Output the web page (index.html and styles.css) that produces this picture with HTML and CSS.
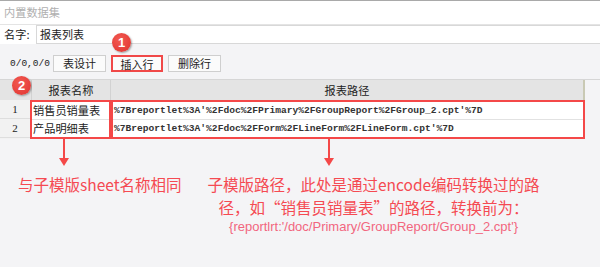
FILE: index.html
```html
<!DOCTYPE html>
<html lang="zh-CN">
<head>
    <meta charset="UTF-8">
    <title>内置数据集</title>
    <link rel="stylesheet" href="styles.css">
</head>
<body>
    <div class="dialog">
        <div class="titlebar">内置数据集</div>

        <div class="name-row">
            <span class="name-label">名字:</span>
            <div class="name-input">报表列表</div>
        </div>

        <!-- toolbar -->
        <div class="toolbar">
            <span class="pos">0/0,0/0</span>
            <button class="btn">表设计</button>
            <button class="btn btn-marked">插入行<span class="badge badge-1">1</span></button>
            <button class="btn">删除行</button>
        </div>

        <!-- data grid -->
        <div class="grid">
            <div class="grid-head">
                <div class="hcell hcell-num"><span class="badge badge-2">2</span></div>
                <div class="hcell hcell-name">报表名称</div>
                <div class="hcell hcell-path">报表路径</div>
            </div>
            <div class="grid-body">
                <div class="col-num">
                    <div class="num">1</div>
                    <div class="num">2</div>
                </div>
                <div class="col col-name marked">
                    <div class="cell">销售员销量表</div>
                    <div class="cell">产品明细表</div>
                    <span class="arrow arrow-name"></span>
                </div>
                <div class="col col-path marked">
                    <div class="cell">%7Breportlet%3A'%2Fdoc%2FPrimary%2FGroupReport%2FGroup_2.cpt'%7D</div>
                    <div class="cell">%7Breportlet%3A'%2Fdoc%2FForm%2FLineForm%2FLineForm.cpt'%7D</div>
                    <span class="arrow arrow-path"></span>
                </div>
            </div>
        </div>

        <!-- notes -->
        <div class="notes">
            <p class="note note-left">与子模版sheet名称相同</p>
            <div class="note note-right">
                <p>子模版路径，此处是通过encode编码转换过的路</p>
                <p>径，如“销售员销量表”的路径，转换前为：</p>
                <p class="note-code">{reportlrt:'/doc/Primary/GroupReport/Group_2.cpt'}</p>
            </div>
        </div>
    </div>
</body>
</html>
```

FILE: styles.css
```css
body {
    margin: 0;
    padding: 0;
    background: #f4f4f6;
    font-family: "Noto Sans CJK SC", "Noto Sans", sans-serif;
    color: #222;
}

.dialog {
    width: 600px;
    height: 267px;
    overflow: hidden;
    background: #f4f4f6;
}

.titlebar {
    height: 23px;
    line-height: 23px;
    padding-left: 4px;
    font-size: 11.2px;
    color: #b0b0b0;
    background: #fff;
    border-top: 1px solid #a9a9a9;
    border-bottom: 1px solid #e4e4e4;
}

.name-row {
    display: flex;
    align-items: stretch;
    height: 19px;
    background: #fff;
}

.name-label {
    width: 32px;
    padding-left: 4px;
    font-size: 11.2px;
    line-height: 19px;
}

.name-input {
    flex-grow: 1;
    border: 1px solid #d8d8d8;
    border-right: none;
    padding-left: 3px;
    font-size: 11px;
    line-height: 17px;
    background: #fff;
}

.toolbar {
    display: flex;
    align-items: center;
    gap: 5px;
    height: 35px;
    padding-left: 10px;
    padding-top: 4px;
    box-sizing: border-box;
}

.pos {
    font-family: "Liberation Mono", monospace;
    font-size: 9.5px;
    width: 38px;
}

.btn {
    position: relative;
    width: 53px;
    height: 17px;
    padding: 0;
    font-family: "Noto Sans CJK SC", sans-serif;
    font-size: 11px;
    line-height: 15px;
    color: #222;
    background: #fbfbfb;
    border: 1px solid #cfcfcf;
}

.btn-marked {
    width: 52px;
    border: 2px solid #f04848;
}

.badge {
    position: absolute;
    width: 19px;
    height: 19px;
    border-radius: 50%;
    background: radial-gradient(circle at 40% 35%, #f25a52, #e0322e);
    box-shadow: 1px 1px 2px rgba(0, 0, 0, 0.35);
    color: #fff;
    font-family: "Liberation Sans", Arial, sans-serif;
    font-weight: bold;
    font-size: 13px;
    line-height: 19px;
    text-align: center;
}

.badge-1 {
    left: -1px;
    top: -24px;
}

.badge-2 {
    left: 12px;
    top: -4px;
}

.grid {
    border-left: 2px solid #e2e2e4;
    margin-left: -2px;
}

.grid-head {
    display: flex;
    height: 20px;
    border-top: 1px solid #d6d6d6;
}

.hcell {
    position: relative;
    height: 20px;
    line-height: 20px;
    font-size: 11.2px;
    text-align: center;
    background: #e4e4e4;
    border-right: 1px solid #d2d2d2;
    box-sizing: border-box;
}

.hcell-num {
    width: 32px;
}

.hcell-name {
    width: 79px;
}

.hcell-path {
    width: 474px;
    border-right: 2px solid #c9c9b4;
}

.grid-body {
    display: flex;
}

.col-num {
    width: 30px;
    background: #f2f2f2;
}

.num {
    height: 18px;
    line-height: 18px;
    border-bottom: 1px solid #dedede;
    font-family: "Liberation Serif", serif;
    font-size: 11px;
    text-align: center;
}

.col {
    position: relative;
    background: #fff;
}

.marked {
    border: 2px solid #f44848;
}

.col-name {
    width: 77px;
}

.col-path {
    width: 470px;
}

.cell {
    height: 17px;
    line-height: 17px;
    padding-left: 1px;
    white-space: nowrap;
    overflow: hidden;
}

.cell + .cell {
    border-top: 1px solid #e2e2e2;
}

.col-name .cell {
    font-size: 11.2px;
}

.col-path .cell {
    font-family: "Liberation Mono", monospace;
    font-size: 9.6px;
    font-weight: bold;
    color: #333;
}

/* red pointer arrows under the marked columns */
.arrow {
    position: absolute;
    top: 100%;
    width: 2px;
    height: 21px;
    background: #f44848;
}

.arrow::after {
    content: "";
    position: absolute;
    left: -4px;
    top: 21px;
    border-left: 5px solid transparent;
    border-right: 5px solid transparent;
    border-top: 8px solid #f44848;
}

.arrow-name {
    left: 31px;
}

.arrow-path {
    left: 215px;
}

.notes {
    display: flex;
    align-items: flex-start;
    gap: 25px;
    margin-top: 34px;
    padding-left: 18px;
    color: #f54a52;
    font-size: 15.5px;
}

.note p,
p.note {
    margin: 0;
    line-height: 23px;
}

.note-right {
    width: 334px;
    text-align: center;
}

.note-right p.note-code {
    font-family: "Liberation Sans", Arial, sans-serif;
    font-size: 13px;
    line-height: 16px;
    color: #f2667e;
}
```
